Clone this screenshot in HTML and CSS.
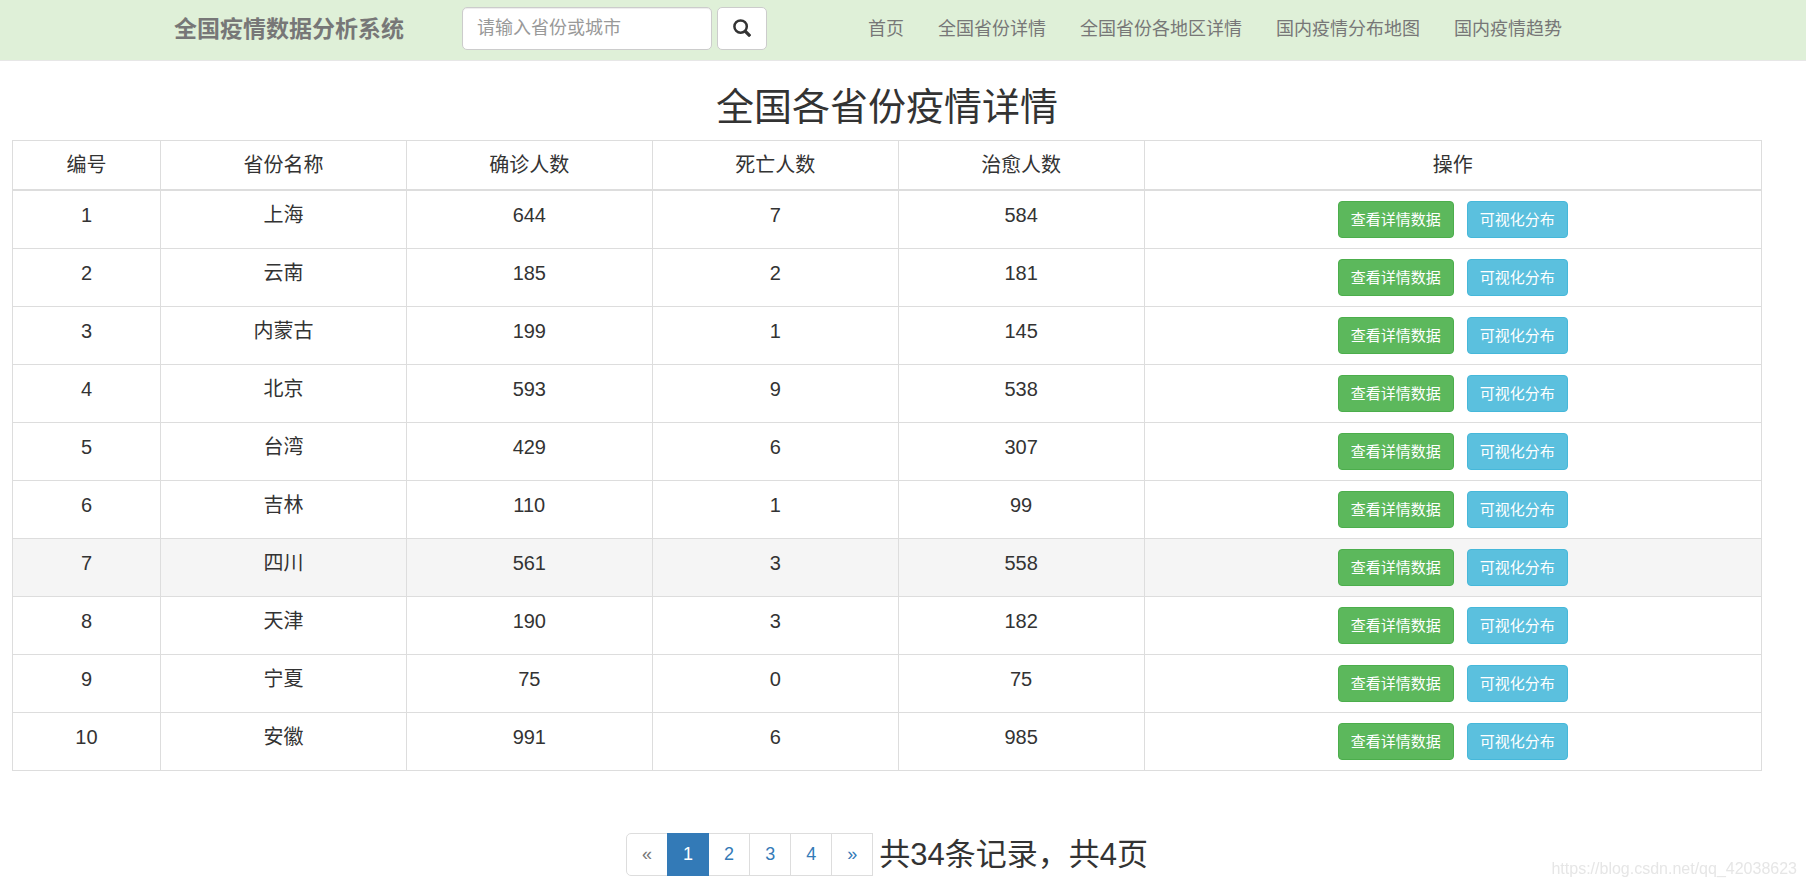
FILE: index.html
```html
<!DOCTYPE html>
<html lang="zh-CN">
<head>
    <meta charset="UTF-8">
    <meta name="viewport" content="width=device-width, initial-scale=1.0">
    <title>全国疫情数据分析系统</title>
    <link rel="stylesheet" href="styles.css">
</head>
<body>
    <nav class="navbar">
        <div class="navbar-inner">
            <a class="brand" href="#">全国疫情数据分析系统</a>
            <form class="search">
                <input type="text" name="keyword" placeholder="请输入省份或城市" aria-label="请输入省份或城市">
                <button type="button" aria-label="搜索">
                    <svg width="18" height="18" viewBox="0 0 18 18" fill="none" stroke="#333">
                        <circle cx="7.6" cy="7.6" r="6.2" stroke-width="2.5"/>
                        <path d="M12 12L17.2 17.2" stroke-width="3.2"/>
                    </svg>
                </button>
            </form>
            <div class="menu">
                <a href="#">首页</a>
                <a href="#">全国省份详情</a>
                <a href="#">全国省份各地区详情</a>
                <a href="#">国内疫情分布地图</a>
                <a href="#">国内疫情趋势</a>
            </div>
        </div>
    </nav>

    <main class="content">
        <h1>全国各省份疫情详情</h1>
        <table class="table">
            <colgroup>
                <col class="col-id">
                <col class="col-data" span="4">
                <col>
            </colgroup>
            <thead>
                <tr>
                    <th>编号</th>
                    <th>省份名称</th>
                    <th>确诊人数</th>
                    <th>死亡人数</th>
                    <th>治愈人数</th>
                    <th>操作</th>
                </tr>
            </thead>
            <tbody>
                <tr>
                    <td>1</td><td>上海</td><td>644</td><td>7</td><td>584</td>
                    <td><div class="actions"><button class="btn btn-success">查看详情数据</button><button class="btn btn-info">可视化分布</button></div></td>
                </tr>
                <tr>
                    <td>2</td><td>云南</td><td>185</td><td>2</td><td>181</td>
                    <td><div class="actions"><button class="btn btn-success">查看详情数据</button><button class="btn btn-info">可视化分布</button></div></td>
                </tr>
                <tr>
                    <td>3</td><td>内蒙古</td><td>199</td><td>1</td><td>145</td>
                    <td><div class="actions"><button class="btn btn-success">查看详情数据</button><button class="btn btn-info">可视化分布</button></div></td>
                </tr>
                <tr>
                    <td>4</td><td>北京</td><td>593</td><td>9</td><td>538</td>
                    <td><div class="actions"><button class="btn btn-success">查看详情数据</button><button class="btn btn-info">可视化分布</button></div></td>
                </tr>
                <tr>
                    <td>5</td><td>台湾</td><td>429</td><td>6</td><td>307</td>
                    <td><div class="actions"><button class="btn btn-success">查看详情数据</button><button class="btn btn-info">可视化分布</button></div></td>
                </tr>
                <tr>
                    <td>6</td><td>吉林</td><td>110</td><td>1</td><td>99</td>
                    <td><div class="actions"><button class="btn btn-success">查看详情数据</button><button class="btn btn-info">可视化分布</button></div></td>
                </tr>
                <tr class="active">
                    <td>7</td><td>四川</td><td>561</td><td>3</td><td>558</td>
                    <td><div class="actions"><button class="btn btn-success">查看详情数据</button><button class="btn btn-info">可视化分布</button></div></td>
                </tr>
                <tr>
                    <td>8</td><td>天津</td><td>190</td><td>3</td><td>182</td>
                    <td><div class="actions"><button class="btn btn-success">查看详情数据</button><button class="btn btn-info">可视化分布</button></div></td>
                </tr>
                <tr>
                    <td>9</td><td>宁夏</td><td>75</td><td>0</td><td>75</td>
                    <td><div class="actions"><button class="btn btn-success">查看详情数据</button><button class="btn btn-info">可视化分布</button></div></td>
                </tr>
                <tr>
                    <td>10</td><td>安徽</td><td>991</td><td>6</td><td>985</td>
                    <td><div class="actions"><button class="btn btn-success">查看详情数据</button><button class="btn btn-info">可视化分布</button></div></td>
                </tr>
            </tbody>
        </table>

        <div class="pager">
            <ul class="pagination">
                <li class="disabled"><a href="#">&laquo;</a></li>
                <li class="current"><a href="#">1</a></li>
                <li><a href="#">2</a></li>
                <li><a href="#">3</a></li>
                <li><a href="#">4</a></li>
                <li><a href="#">&raquo;</a></li>
            </ul>
            <span class="total">共34条记录，共4页</span>
        </div>
    </main>

    <div class="watermark">https://blog.csdn.net/qq_42038623</div>
</body>
</html>
```
FILE: styles.css
```css
* {
    box-sizing: border-box;
}

body {
    margin: 0;
    font-family: "Liberation Sans", "Noto Sans CJK SC", sans-serif;
    font-size: 18px;
    color: #333;
    background: #fff;
}

a {
    text-decoration: none;
}

input,
button {
    font-family: inherit;
}

/* Navbar */
.navbar {
    background: #dff0d8;
    border-bottom: 1px solid #e7e7e7;
}

.navbar-inner {
    display: flex;
    align-items: center;
    max-width: 1462px;
    height: 60px;
    margin: 0 auto;
    padding: 0 72px 4px 2px;
}

.brand {
    padding-bottom: 3px;
    font-size: 23px;
    font-weight: bold;
    color: #777;
    white-space: nowrap;
}

.search {
    display: flex;
    gap: 5px;
    margin-left: 58px;
}

.search input {
    width: 250px;
    height: 43px;
    padding: 0 14px;
    font-size: 18px;
    border: 1px solid #ccc;
    border-radius: 5px;
    box-shadow: inset 0 1px 1px rgba(0, 0, 0, 0.075);
}

.search input::placeholder {
    color: #999;
}

.search button {
    display: flex;
    align-items: center;
    justify-content: center;
    width: 50px;
    height: 43px;
    padding: 0;
    background: #fff;
    border: 1px solid #ccc;
    border-radius: 5px;
    cursor: pointer;
}

.menu {
    display: flex;
    gap: 34px;
    margin-left: auto;
    padding-bottom: 3px;
    white-space: nowrap;
}

.menu a {
    color: #777;
}

/* Content */
.content {
    padding: 0 44px 0 12px;
}

h1 {
    margin: 26px 0 12px;
    font-size: 38px;
    font-weight: normal;
    line-height: 41px;
    text-align: center;
}

.table {
    width: 100%;
    table-layout: fixed;
    border-collapse: collapse;
    font-size: 20px;
    line-height: 28px;
    text-align: center;
}

.col-id {
    width: 8.46%;
}

.col-data {
    width: 14.06%;
}

.table th,
.table td {
    padding: 10px;
    font-weight: normal;
    vertical-align: top;
    border: 1px solid #ddd;
}

.table th {
    border-bottom-width: 2px;
}

.table tr.active,
.table tbody tr:hover {
    background: #f5f5f5;
}

.actions {
    display: flex;
    justify-content: center;
    gap: 13px;
}

.btn {
    height: 37px;
    padding: 0 12px 2px;
    font-size: 15px;
    color: #fff;
    border: 1px solid;
    border-radius: 4px;
    cursor: pointer;
}

.btn-success {
    background: #5cb85c;
    border-color: #4cae4c;
}

.btn-info {
    background: #5bc0de;
    border-color: #46b8da;
}

/* Pagination */
.pager {
    display: flex;
    align-items: center;
    justify-content: center;
    gap: 7px;
    margin-top: 62px;
}

.pagination {
    display: flex;
    margin: 0;
    padding: 0;
    list-style: none;
}

.pagination a {
    display: block;
    padding: 0 15px;
    margin-right: -1px;
    line-height: 41px;
    color: #337ab7;
    border: 1px solid #ddd;
}

.pagination li:first-child a {
    border-radius: 5px 0 0 5px;
}

.pagination .disabled a {
    color: #777;
}

.pagination .current a {
    position: relative;
    color: #fff;
    background: #337ab7;
    border-color: #337ab7;
}

.total {
    font-size: 31px;
    line-height: 43px;
}

.watermark {
    position: fixed;
    right: 9px;
    bottom: 9px;
    font-size: 16px;
    color: #e6e6e6;
}
```
